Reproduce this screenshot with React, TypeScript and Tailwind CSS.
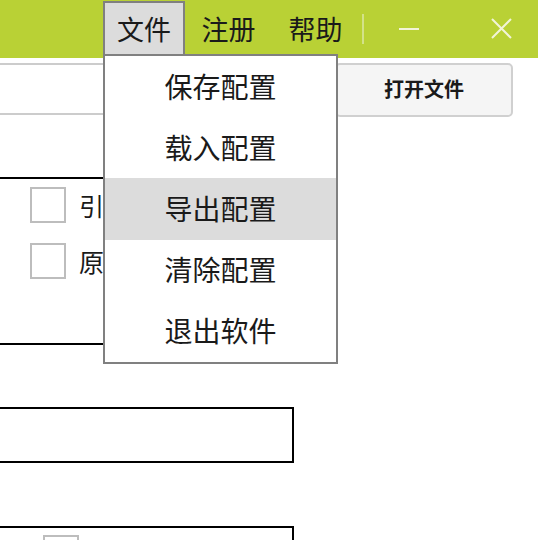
import { useState } from 'react';

const fileMenu = ['保存配置', '载入配置', '导出配置', '清除配置', '退出软件'];

const cjk = { fontFamily: '"Noto Sans CJK SC", "Noto Sans", sans-serif' };

export default function App() {
  const [hover] = useState(2);

  return (
    <div className="relative w-[538px] h-[540px] overflow-hidden bg-white text-[#1a1a1a]" style={cjk}>
      {/* Title bar */}
      <header className="relative z-10 flex h-[58px] items-start bg-[#b9d135]">
        <div className="w-[103px] shrink-0" />
        <button className="mt-[1px] flex h-[55px] w-[82px] items-center justify-center border-2 border-b-0 border-[#808080] bg-[#dcdcdc] pb-[2px] text-[27px] leading-none">
          文件
        </button>
        <button className="flex h-[58px] w-[87px] items-center justify-center pb-[1px] text-[27px] leading-none">
          注册
        </button>
        <button className="flex h-[58px] w-[87px] items-center justify-center pb-[1px] text-[27px] leading-none">
          帮助
        </button>
        <div className="ml-[3px] mt-[14px] h-[30px] w-[2px] bg-[#d3e289]" />
        <button className="ml-[25px] flex h-[58px] w-[40px] items-center justify-center">
          <svg width="20" height="20" viewBox="0 0 20 20">
            <line x1="0" y1="10" x2="20" y2="10" stroke="#f2f4d8" strokeWidth="2" />
          </svg>
        </button>
        <button className="ml-[52px] flex h-[58px] w-[40px] items-center justify-center pb-[1px]">
          <svg width="21" height="21" viewBox="0 0 21 21">
            <path d="M1 1 L20 20 M20 1 L1 20" stroke="#f2f4d8" strokeWidth="2" />
          </svg>
        </button>

        {/* File dropdown */}
        <div className="absolute left-[103px] top-[54px] flex w-[235px] flex-col border-2 border-[#808080] bg-white">
          {fileMenu.map((item, i) => (
            <div
              key={item}
              className={`flex h-[61.2px] items-center justify-center pb-[2px] text-[28px] leading-none ${i === hover ? 'bg-[#dcdcdc]' : ''}`}
            >
              {item}
            </div>
          ))}
        </div>
      </header>

      {/* Content */}
      <main className="ml-[-20px] flex flex-col">
        <div className="mt-[5px] flex items-start gap-[10px]">
          <input className="h-[52px] w-[345px] border-2 border-[#cccccc] bg-white outline-none" readOnly />
          <button className="h-[54px] w-[178px] rounded-[5px] border-2 border-[#d0d0d0] bg-[#f5f5f5] pb-[2px] text-[20px] font-bold">
            打开文件
          </button>
        </div>

        <section className="mt-[60px] flex h-[168px] w-[314px] flex-col gap-[20px] border-2 border-black pl-[48px] pt-[8px]">
          <label className="flex items-center gap-[13px] text-[25px] leading-none">
            <span className="h-[36px] w-[36px] border-2 border-[#bdbdbd]" />
            引用
          </label>
          <label className="flex items-center gap-[13px] text-[25px] leading-none">
            <span className="h-[36px] w-[36px] border-2 border-[#bdbdbd]" />
            原始
          </label>
        </section>

        <section className="mt-[62px] h-[56px] w-[314px] border-2 border-black" />

        <section className="mt-[63px] h-[80px] w-[314px] border-2 border-black pl-[61px] pt-[7px]">
          <span className="block h-[36px] w-[36px] border-2 border-[#bdbdbd]" />
        </section>
      </main>
    </div>
  );
}
